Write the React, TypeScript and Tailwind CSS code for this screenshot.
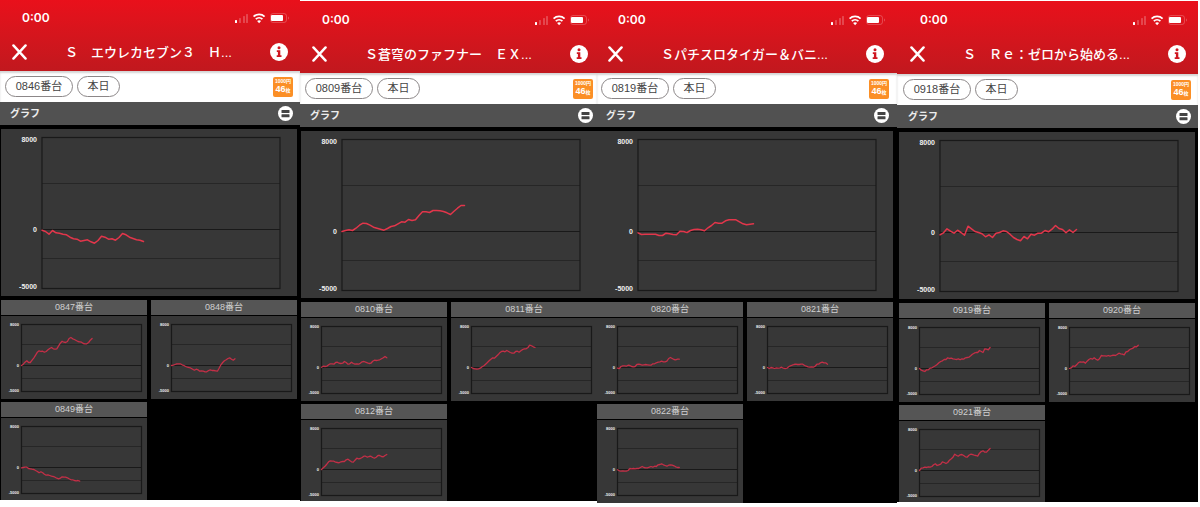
import { clsx } from "clsx";

interface Series {
  unit: string;
  values: number[];
}

interface Machine {
  title: string;
  main: Series;
  others: Series[];
  frame: string;
  body: string;
  header: string;
}

const MACHINES: Machine[] = [
  {
    title: "Ｓ　エウレカセブン３　Ｈ...",
    frame: "max-h-[500px]",
    body: "",
    header: "pt-2.5",
    main: {
      unit: "0846",
      values: [-58, -174, -406, -87, -290, -319, -406, -464, -667, -812, -841, -1015, -957, -899, -1073, -1189, -957, -580, -667, -841, -812, -928, -696, -348, -464, -667, -783, -899, -928, -1044],
    },
    others: [
      {
        unit: "0847",
        values: [0, 260, 650, 910, 585, 585, 1040, 1495, 2015, 2600, 2860, 2730, 2795, 2600, 2730, 3055, 3315, 3510, 3250, 3185, 3250, 3835, 4355, 4745, 4550, 4485, 4680, 5265, 5460, 5200, 5070, 4875, 4680, 4615, 4550, 4290, 4225, 4225, 4485, 4940, 5265],
      },
      {
        unit: "0848",
        values: [0, 65, 195, 325, 325, 325, 130, 0, -195, -325, -390, -520, -715, -910, -715, -845, -1105, -1040, -1105, -1235, -1235, -975, -845, -975, -975, -1040, -1105, -520, 130, 585, 910, 1105, 1365, 1495, 1235, 1040, 1300],
      },
      {
        unit: "0849",
        values: [-65, 0, 65, 65, -195, -260, -325, -390, -585, -780, -1040, -845, -1040, -1300, -1495, -1430, -1560, -1690, -1755, -1885, -2080, -2210, -2080, -1820, -1885, -1885, -2015, -2210, -2405, -2405, -2535, -2600, -2535, -2665],
      },
    ],
  },
  {
    title: "Ｓ蒼穹のファフナー　ＥＸ...",
    frame: "mt-px max-h-[500px]",
    body: "-mr-[3px]",
    header: "pt-[11px]",
    main: {
      unit: "0809",
      values: [0, 87, 145, 87, 290, 551, 725, 696, 551, 377, 290, 203, 116, 261, 435, 493, 667, 841, 812, 1044, 957, 1015, 1392, 1711, 1711, 1653, 1827, 1827, 1798, 1740, 1624, 1479, 1769, 2030, 2262, 2262],
    },
    others: [
      {
        unit: "0810",
        values: [65, 260, 195, 260, 520, 715, 715, 650, 975, 1040, 845, 780, 845, 1170, 975, 650, 715, 1040, 780, 650, 715, 650, 845, 1105, 1170, 1040, 910, 780, 845, 1235, 1430, 1365, 1430, 1495, 1690, 1885, 2145, 1885],
      },
      {
        unit: "0811",
        values: [0, -195, -260, -325, -260, -130, 130, 325, 650, 975, 1300, 1625, 1885, 1820, 2145, 2470, 2860, 3120, 3185, 3055, 3315, 3120, 2925, 2795, 2795, 3120, 3185, 2990, 3250, 3510, 3640, 3640, 3900, 4355, 4225, 4030, 3900],
      },
      {
        unit: "0812",
        values: [0, 325, 650, 1040, 1495, 1690, 1625, 1625, 1430, 1365, 1300, 1495, 1560, 1560, 1885, 2015, 1755, 1495, 1430, 1820, 2210, 2080, 2145, 2340, 2600, 2600, 2405, 2535, 2600, 2340, 2210, 2405, 2730, 2730, 2535, 2470, 2730, 2925],
      },
    ],
  },
  {
    title: "Ｓパチスロタイガー＆バニ...",
    frame: "mt-px max-h-[502px]",
    body: "-ml-px mr-px",
    header: "pt-[11px]",
    main: {
      unit: "0819",
      values: [-116, -261, -232, -232, -232, -232, -348, -348, -145, -203, -261, -290, 29, 0, -87, 87, 174, 203, 145, 58, 319, 522, 783, 725, 725, 928, 1015, 1015, 1015, 841, 667, 580, 638, 667],
    },
    others: [
      {
        unit: "0820",
        values: [-130, -195, 195, 325, 325, 260, 455, 390, 195, 130, 195, 585, 650, 585, 455, 520, 585, 520, 455, 455, 715, 715, 910, 1040, 1105, 1235, 1105, 1105, 1235, 1755, 1950, 1755, 1560, 1495, 1625, 1625],
      },
      {
        unit: "0821",
        values: [0, -195, 0, -65, -195, -65, -130, -65, 65, -130, -195, -130, 130, 325, 455, 585, 650, 585, 585, 650, 650, 390, 260, 130, 65, 130, 65, 260, 650, 650, 910, 1040, 910, 910, 650],
      },
      {
        unit: "0822",
        values: [-65, -260, -325, -260, -325, -325, -195, 195, 130, 195, 130, 195, 195, 390, 585, 390, 325, 325, 455, 585, 455, 650, 585, 910, 975, 1105, 910, 780, 650, 845, 910, 845, 715, 520, 390, 390],
      },
    ],
  },
  {
    title: "Ｓ　Ｒｅ：ゼロから始める...",
    frame: "mt-px max-h-[501px]",
    body: "pl-px",
    header: "pt-[11px] pb-px",
    main: {
      unit: "0918",
      values: [-203, -29, 319, 116, -58, 203, 0, -232, 551, 319, 87, 0, -116, -377, -203, -435, -58, 0, 145, 87, -145, -435, -609, -725, -348, -551, -145, -232, -58, -58, 174, 58, 290, 609, 348, 261, -29, 232, 0, 261],
    },
    others: [
      {
        unit: "0919",
        values: [0, -325, -455, -585, -260, -260, 65, 130, 325, 520, 780, 1105, 1365, 1495, 1755, 1755, 2080, 1950, 2015, 1885, 1820, 1755, 1885, 1690, 1885, 1820, 2080, 2145, 2210, 2470, 2795, 2990, 3120, 3120, 3510, 3315, 3120, 3835, 3770, 3640, 4095],
      },
      {
        unit: "0920",
        values: [0, 130, 520, 390, 715, 1105, 1300, 1235, 1300, 1040, 1430, 1755, 1950, 1820, 2080, 1820, 1625, 1885, 2535, 2470, 2470, 2405, 2535, 2405, 2535, 2600, 2535, 2730, 2990, 2860, 2795, 2665, 3250, 3315, 3640, 3835, 3965, 4290, 4225, 4550],
      },
      {
        unit: "0921",
        values: [0, 455, 520, 650, 585, 715, 650, 780, 1105, 1300, 975, 1105, 1235, 1690, 1560, 1365, 1560, 2015, 2275, 2600, 3185, 2925, 2795, 3055, 3120, 2925, 2665, 2600, 2990, 3185, 3120, 2990, 2925, 2795, 3380, 3705, 3835, 3575, 3575, 3965, 4290],
      },
    ],
  },
];

// samples across the full width of a plot
const SLOTS = 68;

const LARGE = { w: 296, h: 167, left: 41, right: 279, top: 8.5, half: 54.5, zero: 100.5, low: 129.5, bottom: 159.5, labelX: 36, font: 7, stroke: 1.5, line: "#e2364b" };
const SMALL = { w: 146, h: 83, left: 20.5, right: 140.5, top: 8.5, half: 28.5, zero: 49.5, low: 62.5, bottom: 75.5, labelX: 18, font: 4, stroke: 1.3, line: "#c42f47" };

function Chart({ series, size }: { series: Series; size: typeof LARGE }) {
  const step = (size.right - size.left) / SLOTS;
  const scale = (size.zero - size.top) / 8000;
  const points = series.values
    .map((v, i) => `${(size.left + i * step).toFixed(1)},${(size.zero - v * scale).toFixed(1)}`)
    .join(" ");
  const baseline = size.font * 0.36;

  return (
    <svg viewBox={`0 0 ${size.w} ${size.h}`} className="block w-full bg-[#373737]" role="img" aria-label={`${series.unit}番台 グラフ`}>
      <g stroke="#262626" strokeWidth="1">
        <line x1={size.left} x2={size.right} y1={size.half} y2={size.half} />
        <line x1={size.left} x2={size.right} y1={size.low} y2={size.low} />
      </g>
      <line x1={size.left} x2={size.right} y1={size.zero} y2={size.zero} stroke="#191919" />
      <rect x={size.left} y={size.top} width={size.right - size.left} height={size.bottom - size.top} fill="none" stroke="#191919" strokeWidth="1.2" />
      <g fill="#f0f0f0" fontSize={size.font} fontWeight="700" textAnchor="end">
        <text x={size.labelX} y={size.top + baseline + (size.font > 5 ? 2 : 0)}>8000</text>
        <text x={size.labelX} y={size.zero + baseline}>0</text>
        <text x={size.labelX} y={size.bottom + baseline - (size.font > 5 ? 2.5 : 1)}>-5000</text>
      </g>
      <polyline points={points} fill="none" stroke={size.line} strokeWidth={size.stroke} strokeLinejoin="round" strokeLinecap="round" />
    </svg>
  );
}

function StatusIcons() {
  return (
    <svg width="56" height="12" viewBox="0 0 56 12" fill="none" aria-hidden="true">
      {/* signal */}
      <rect x="1" y="8" width="2" height="3" rx="0.5" fill="#fff" />
      <g fill="#fff" opacity="0.22">
        <rect x="5" y="6" width="2" height="5" rx="0.5" />
        <rect x="9" y="4" width="2" height="7" rx="0.5" />
        <rect x="12" y="2" width="2" height="9" rx="0.5" />
      </g>
      {/* wifi */}
      <g stroke="#fff" strokeWidth="1.8">
        <path d="M19.6 4.6a8 8 0 0 1 11 0" />
        <path d="M21.8 7.2a4.8 4.8 0 0 1 6.6 0" />
      </g>
      <path d="M25.1 11.3l-2-2.2a3 3 0 0 1 4 0z" fill="#fff" />
      {/* battery */}
      <rect x="36.5" y="1.5" width="16" height="9" rx="2.5" stroke="#fff" strokeOpacity="0.22" />
      <rect x="37" y="3" width="12" height="6" rx="1" fill="#fff" />
      <path d="M54 4.5c1.3.5 1.3 2.5 0 3z" fill="#fff" opacity="0.25" />
    </svg>
  );
}

function Header({ title, className }: { title: string; className: string }) {
  return (
    <header className={clsx("text-white", className)}>
      <div className="flex h-4 items-center justify-between pl-[22px] pr-[10px]">
        <span className="font-['Inter','Liberation_Sans',sans-serif] text-[12px] font-semibold leading-4">0:00</span>
        <StatusIcons />
      </div>
      <div className="mt-4 flex h-[29px] items-start justify-between px-3">
        <button type="button" aria-label="閉じる" className="mt-[2px]">
          <svg width="15" height="16" viewBox="0 0 15 16" stroke="#fff" strokeWidth="2.4" strokeLinecap="round">
            <path d="M1.4 1.4L13.6 14.6M13.6 1.4L1.4 14.6" />
          </svg>
        </button>
        <h1 className="whitespace-pre text-[13px] font-medium leading-[22px]">{title}</h1>
        <button type="button" aria-label="情報" className="mt-px">
          <svg width="18" height="18" viewBox="0 0 18 18">
            <circle cx="9" cy="9" r="9" fill="#fff" />
            <g fill="#cf1620">
              <circle cx="9" cy="4.7" r="1.5" />
              <path d="M6.8 7.2h3.5v5.1h1.2v1.8H6.7v-1.8h1.2V8.9H6.8z" />
            </g>
          </svg>
        </button>
      </div>
    </header>
  );
}

function Phone({ machine }: { machine: Machine }) {
  return (
    <section className={clsx("self-start overflow-hidden bg-black", machine.frame)}>
      <div className="bg-gradient-to-b from-[#e9101b] to-[#c1181e]">
        <div className={machine.body}>
          <Header title={machine.title} className={machine.header} />
        </div>
      </div>

      <div className="bg-white shadow-[inset_0_2px_2px_#d4d4d4]">
        <div className={machine.body}>
          <div className="flex h-[31px] items-center gap-1 pl-[5px] pr-[7px]">
            <button type="button" className="h-[21px] w-[68px] rounded-full border border-[#8c8788] bg-white text-[11px] leading-none text-[#444]">
              {machine.main.unit}番台
            </button>
            <button type="button" className="h-[21px] w-[43px] rounded-full border border-[#8c8788] bg-white text-[11px] leading-none text-[#444]">
              本日
            </button>
            <div className="ml-auto flex h-5 w-5 flex-col items-center justify-center rounded-[2px] bg-[#fb8f26] font-bold text-white">
              <span className="text-[5px] leading-[7px]">1000円</span>
              <span className="whitespace-nowrap text-[9px] leading-[9px]">
                46<span className="text-[5px]">枚</span>
              </span>
            </div>
          </div>
        </div>
      </div>

      <div className="bg-[#515151]">
        <div className={machine.body}>
          <div className="flex h-[23px] items-center justify-between pl-[10px] pr-[7px]">
            <h2 className="text-[10px] font-bold leading-none text-[#ececec]">グラフ</h2>
            <button type="button" aria-label="表示切替">
              <svg width="15" height="15" viewBox="0 0 15 15">
                <circle cx="7.5" cy="7.5" r="7.5" fill="#fff" />
                <g fill="#444">
                  <rect x="3.5" y="4" width="8" height="3" rx="0.5" />
                  <rect x="3.5" y="8.2" width="8" height="3" rx="0.5" />
                </g>
              </svg>
            </button>
          </div>
        </div>
      </div>

      <div className={machine.body}>
        <div className="pl-px pr-[3px] pt-1">
          <Chart series={machine.main} size={LARGE} />
          <div className="mt-1 grid grid-cols-2 gap-x-1 gap-y-[3px]">
            {machine.others.map((series) => (
              <article key={series.unit}>
                <h3 className="mb-px h-[15px] bg-[#555] text-center text-[9px] leading-[15px] text-[#d0d0d0]">
                  {series.unit}番台
                </h3>
                <Chart series={series} size={SMALL} />
              </article>
            ))}
          </div>
        </div>
      </div>
    </section>
  );
}

export default function App() {
  return (
    <main className="grid min-h-screen grid-cols-[300fr_297fr_300fr_301fr] bg-white pr-[2px] font-['Liberation_Sans','Noto_Sans_CJK_JP',sans-serif]">
      {MACHINES.map((machine) => (
        <Phone key={machine.main.unit} machine={machine} />
      ))}
    </main>
  );
}
